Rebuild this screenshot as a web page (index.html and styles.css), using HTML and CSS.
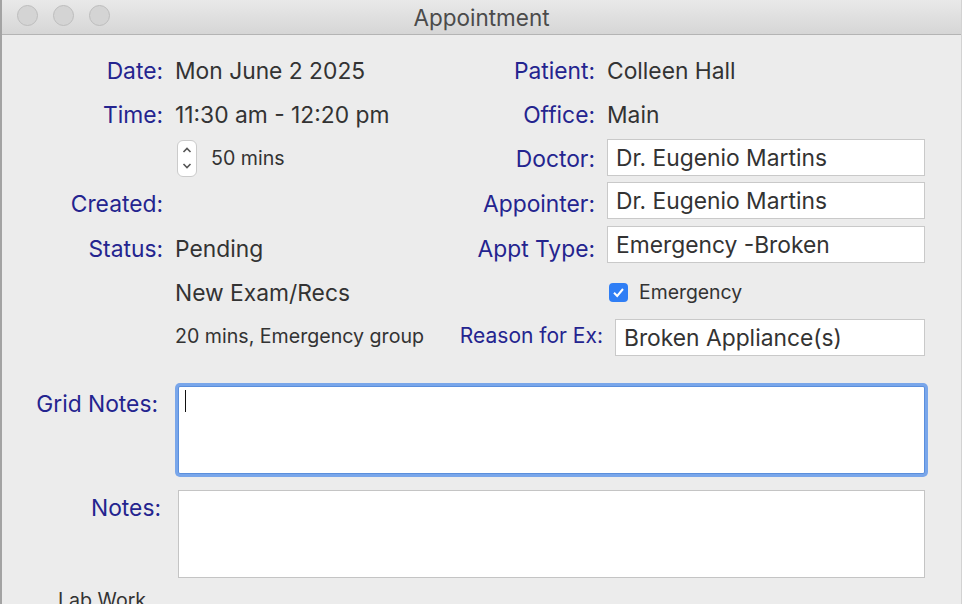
FILE: index.html
```html
<!DOCTYPE html>
<html lang="en">
<head>
  <meta charset="UTF-8" />
  <title>Appointment</title>
  <link rel="stylesheet" href="styles.css">
</head>
<body>

  <div class="window">
    <header class="titlebar">
      <div class="lights">
        <span></span><span></span><span></span>
      </div>
      <div class="title">Appointment</div>
    </header>

    <main>
      <div class="fields">
        <label>Date:</label>
        <div class="value">Mon June 2 2025</div>
        <label>Patient:</label>
        <div class="value">Colleen Hall</div>

        <label>Time:</label>
        <div class="value">11:30 am - 12:20 pm</div>
        <label>Office:</label>
        <div class="value">Main</div>

        <div></div>
        <div class="duration">
          <span class="stepper">
            <svg width="12" height="30" viewBox="0 0 12 30">
              <path d="M2.5 9 L6 5.5 L9.5 9" />
              <path d="M2.5 21 L6 24.5 L9.5 21" />
            </svg>
          </span>
          <span>50 mins</span>
        </div>
        <label>Doctor:</label>
        <input type="text" class="doctor" value="Dr. Eugenio Martins">

        <label>Created:</label>
        <div class="value"></div>
        <label>Appointer:</label>
        <input type="text" class="appointer" value="Dr. Eugenio Martins">

        <label>Status:</label>
        <div class="value">Pending</div>
        <label>Appt Type:</label>
        <input type="text" class="appt-type" value="Emergency -Broken">

        <div></div>
        <div class="value">New Exam/Recs</div>
        <div></div>
        <div class="check">
          <span class="box">
            <svg width="19" height="19" viewBox="0 0 19 19">
              <path d="M5 9.8 L8.2 13 L14 6" />
            </svg>
          </span>
          <span>Emergency</span>
        </div>

        <div></div>
        <div class="value small">20 mins, Emergency group</div>
        <label class="wide">Reason for Ex:</label>
        <input type="text" class="reason" value="Broken Appliance(s)">
      </div>

      <div class="notes">
        <label>Grid Notes:</label>
        <div class="area focused"><span class="caret"></span></div>

        <label>Notes:</label>
        <div class="area"></div>
      </div>

      <div class="lab">Lab Work</div>
    </main>
  </div>

</body>
</html>
```

FILE: styles.css
```css
body {
  margin: 0;
  font-family: Inter, "Liberation Sans", Arial, sans-serif;
  background: #ececec;
  overflow: hidden;
}

.window {
  height: 604px;
  border-left: 2px solid #a3a3a3;
  border-right: 1px solid #d2d2d2;
  background: #ececec;
}

.titlebar {
  height: 34px;
  background: linear-gradient(#e9e9e9, #d6d6d6);
  border-bottom: 1px solid #b4b4b4;
  display: flex;
  align-items: center;
  justify-content: center;
  position: relative;
}

.lights {
  position: absolute;
  left: 15px;
  top: 5px;
  display: flex;
  gap: 15px;
}

.lights span {
  width: 19px;
  height: 19px;
  border-radius: 50%;
  background: #d4d4d4;
  border: 1px solid #bdbdbd;
}

.title {
  font-size: 22.5px;
  color: #4b4b4b;
  padding-top: 1px;
}

main {
  padding-top: 13px;
}

.fields {
  display: grid;
  grid-template-columns: 161px 268px 140px 318px;
  grid-template-rows: 44px 44px 44px 46px 44px 44px 42px;
  column-gap: 12px;
  align-items: center;
}

label {
  text-align: right;
  color: #24248f;
  font-size: 22.8px;
}

label.wide {
  margin-right: -8px;
  white-space: nowrap;
  font-size: 21px;
}

.value {
  font-size: 22.8px;
  color: #333;
}

.value.small {
  font-size: 19.6px;
  padding-top: 2px;
}

input {
  height: 37px;
  box-sizing: border-box;
  border: 1px solid #c9c9c9;
  background: #fff;
  font-family: inherit;
  font-size: 22.8px;
  color: #333;
  padding: 0 8px;
  margin: 0;
  width: 100%;
}

input.doctor {
  margin-bottom: 2px;
}

input.appointer {
  margin-bottom: 6px;
}

input.appt-type {
  margin-bottom: 8px;
}

input.reason {
  margin-top: 4px;
  margin-left: 8px;
  width: calc(100% - 8px);
}

.duration {
  display: flex;
  align-items: center;
  gap: 14px;
  font-size: 19.6px;
  color: #333;
}

.stepper {
  margin-left: 2px;
  width: 20px;
  height: 37px;
  box-sizing: border-box;
  border: 1px solid #cbcbcb;
  border-radius: 6px;
  background: #fff;
  display: flex;
  align-items: center;
  justify-content: center;
}

.stepper path {
  fill: none;
  stroke: #555;
  stroke-width: 1.6;
}

.check {
  display: flex;
  align-items: center;
  gap: 11px;
  font-size: 19.4px;
  color: #333;
  padding-left: 2px;
}

.check .box {
  width: 19px;
  height: 19px;
  border-radius: 4px;
  background: #2f7ef5;
  display: flex;
}

.check path {
  fill: none;
  stroke: #fff;
  stroke-width: 2;
}

.notes {
  margin-top: 30px;
  display: grid;
  grid-template-columns: 159px 747px;
  column-gap: 17px;
  row-gap: 16px;
}

.notes label {
  padding-top: 4px;
}

.notes label:nth-of-type(1) {
  margin-right: 3px;
}

.area {
  height: 88px;
  box-sizing: border-box;
  background: #fff;
  border: 1px solid #c4c4c4;
}

.area.focused {
  border-color: #5b8fdc;
  box-shadow: 0 0 0 3px #79a6ea;
  border-radius: 2px;
  padding: 3px 6px;
}

.caret {
  display: block;
  width: 1px;
  height: 22px;
  background: #111;
}

.lab {
  margin: 10px 0 0 56px;
  font-size: 19.6px;
  color: #333;
}
```
